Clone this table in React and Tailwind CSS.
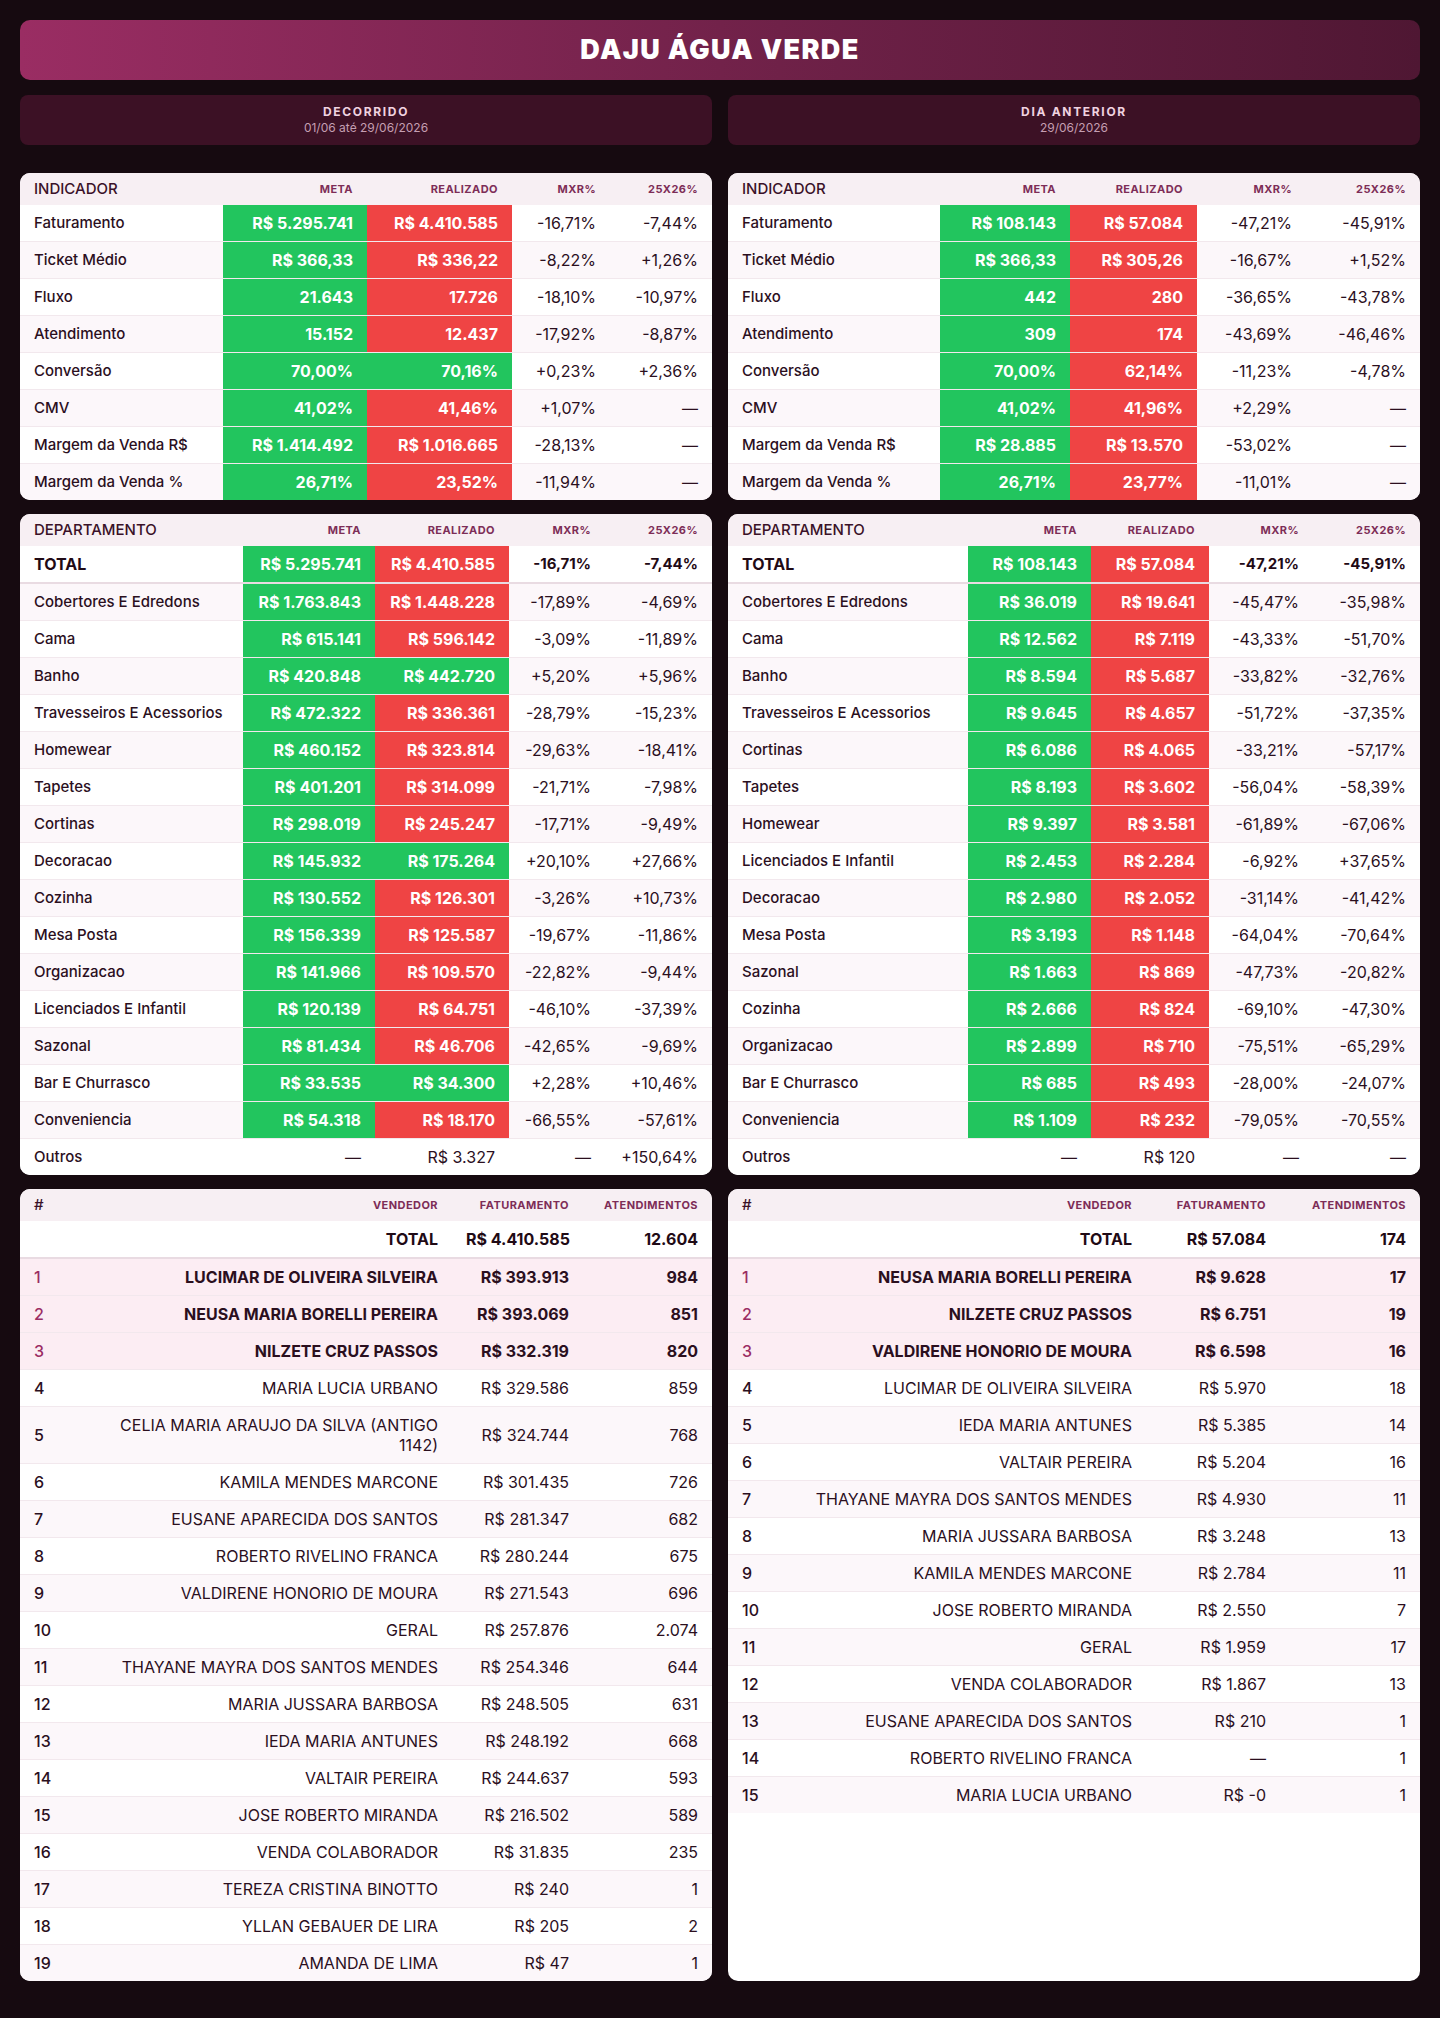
import React from 'react';

const G = 'g';
const R = 'r';

const indicadorDecorrido = [
  ['Faturamento', 'R$ 5.295.741', G, 'R$ 4.410.585', R, '-16,71%', '-7,44%'],
  ['Ticket Médio', 'R$ 366,33', G, 'R$ 336,22', R, '-8,22%', '+1,26%'],
  ['Fluxo', '21.643', G, '17.726', R, '-18,10%', '-10,97%'],
  ['Atendimento', '15.152', G, '12.437', R, '-17,92%', '-8,87%'],
  ['Conversão', '70,00%', G, '70,16%', G, '+0,23%', '+2,36%'],
  ['CMV', '41,02%', G, '41,46%', R, '+1,07%', '—'],
  ['Margem da Venda R$', 'R$ 1.414.492', G, 'R$ 1.016.665', R, '-28,13%', '—'],
  ['Margem da Venda %', '26,71%', G, '23,52%', R, '-11,94%', '—'],
];

const indicadorDia = [
  ['Faturamento', 'R$ 108.143', G, 'R$ 57.084', R, '-47,21%', '-45,91%'],
  ['Ticket Médio', 'R$ 366,33', G, 'R$ 305,26', R, '-16,67%', '+1,52%'],
  ['Fluxo', '442', G, '280', R, '-36,65%', '-43,78%'],
  ['Atendimento', '309', G, '174', R, '-43,69%', '-46,46%'],
  ['Conversão', '70,00%', G, '62,14%', R, '-11,23%', '-4,78%'],
  ['CMV', '41,02%', G, '41,96%', R, '+2,29%', '—'],
  ['Margem da Venda R$', 'R$ 28.885', G, 'R$ 13.570', R, '-53,02%', '—'],
  ['Margem da Venda %', '26,71%', G, '23,77%', R, '-11,01%', '—'],
];

const deptDecorrido = [
  ['Cobertores E Edredons', 'R$ 1.763.843', G, 'R$ 1.448.228', R, '-17,89%', '-4,69%'],
  ['Cama', 'R$ 615.141', G, 'R$ 596.142', R, '-3,09%', '-11,89%'],
  ['Banho', 'R$ 420.848', G, 'R$ 442.720', G, '+5,20%', '+5,96%'],
  ['Travesseiros E Acessorios', 'R$ 472.322', G, 'R$ 336.361', R, '-28,79%', '-15,23%'],
  ['Homewear', 'R$ 460.152', G, 'R$ 323.814', R, '-29,63%', '-18,41%'],
  ['Tapetes', 'R$ 401.201', G, 'R$ 314.099', R, '-21,71%', '-7,98%'],
  ['Cortinas', 'R$ 298.019', G, 'R$ 245.247', R, '-17,71%', '-9,49%'],
  ['Decoracao', 'R$ 145.932', G, 'R$ 175.264', G, '+20,10%', '+27,66%'],
  ['Cozinha', 'R$ 130.552', G, 'R$ 126.301', R, '-3,26%', '+10,73%'],
  ['Mesa Posta', 'R$ 156.339', G, 'R$ 125.587', R, '-19,67%', '-11,86%'],
  ['Organizacao', 'R$ 141.966', G, 'R$ 109.570', R, '-22,82%', '-9,44%'],
  ['Licenciados E Infantil', 'R$ 120.139', G, 'R$ 64.751', R, '-46,10%', '-37,39%'],
  ['Sazonal', 'R$ 81.434', G, 'R$ 46.706', R, '-42,65%', '-9,69%'],
  ['Bar E Churrasco', 'R$ 33.535', G, 'R$ 34.300', G, '+2,28%', '+10,46%'],
  ['Conveniencia', 'R$ 54.318', G, 'R$ 18.170', R, '-66,55%', '-57,61%'],
  ['Outros', '—', null, 'R$ 3.327', null, '—', '+150,64%'],
];

const deptDia = [
  ['Cobertores E Edredons', 'R$ 36.019', G, 'R$ 19.641', R, '-45,47%', '-35,98%'],
  ['Cama', 'R$ 12.562', G, 'R$ 7.119', R, '-43,33%', '-51,70%'],
  ['Banho', 'R$ 8.594', G, 'R$ 5.687', R, '-33,82%', '-32,76%'],
  ['Travesseiros E Acessorios', 'R$ 9.645', G, 'R$ 4.657', R, '-51,72%', '-37,35%'],
  ['Cortinas', 'R$ 6.086', G, 'R$ 4.065', R, '-33,21%', '-57,17%'],
  ['Tapetes', 'R$ 8.193', G, 'R$ 3.602', R, '-56,04%', '-58,39%'],
  ['Homewear', 'R$ 9.397', G, 'R$ 3.581', R, '-61,89%', '-67,06%'],
  ['Licenciados E Infantil', 'R$ 2.453', G, 'R$ 2.284', R, '-6,92%', '+37,65%'],
  ['Decoracao', 'R$ 2.980', G, 'R$ 2.052', R, '-31,14%', '-41,42%'],
  ['Mesa Posta', 'R$ 3.193', G, 'R$ 1.148', R, '-64,04%', '-70,64%'],
  ['Sazonal', 'R$ 1.663', G, 'R$ 869', R, '-47,73%', '-20,82%'],
  ['Cozinha', 'R$ 2.666', G, 'R$ 824', R, '-69,10%', '-47,30%'],
  ['Organizacao', 'R$ 2.899', G, 'R$ 710', R, '-75,51%', '-65,29%'],
  ['Bar E Churrasco', 'R$ 685', G, 'R$ 493', R, '-28,00%', '-24,07%'],
  ['Conveniencia', 'R$ 1.109', G, 'R$ 232', R, '-79,05%', '-70,55%'],
  ['Outros', '—', null, 'R$ 120', null, '—', '—'],
];

const vendDecorrido = [
  ['LUCIMAR DE OLIVEIRA SILVEIRA', 'R$ 393.913', '984'],
  ['NEUSA MARIA BORELLI PEREIRA', 'R$ 393.069', '851'],
  ['NILZETE CRUZ PASSOS', 'R$ 332.319', '820'],
  ['MARIA LUCIA URBANO', 'R$ 329.586', '859'],
  ['CELIA MARIA ARAUJO DA SILVA (ANTIGO 1142)', 'R$ 324.744', '768'],
  ['KAMILA MENDES MARCONE', 'R$ 301.435', '726'],
  ['EUSANE APARECIDA DOS SANTOS', 'R$ 281.347', '682'],
  ['ROBERTO RIVELINO FRANCA', 'R$ 280.244', '675'],
  ['VALDIRENE HONORIO DE MOURA', 'R$ 271.543', '696'],
  ['GERAL', 'R$ 257.876', '2.074'],
  ['THAYANE MAYRA DOS SANTOS MENDES', 'R$ 254.346', '644'],
  ['MARIA JUSSARA BARBOSA', 'R$ 248.505', '631'],
  ['IEDA MARIA ANTUNES', 'R$ 248.192', '668'],
  ['VALTAIR PEREIRA', 'R$ 244.637', '593'],
  ['JOSE ROBERTO MIRANDA', 'R$ 216.502', '589'],
  ['VENDA COLABORADOR', 'R$ 31.835', '235'],
  ['TEREZA CRISTINA BINOTTO', 'R$ 240', '1'],
  ['YLLAN GEBAUER DE LIRA', 'R$ 205', '2'],
  ['AMANDA DE LIMA', 'R$ 47', '1'],
];

const vendDia = [
  ['NEUSA MARIA BORELLI PEREIRA', 'R$ 9.628', '17'],
  ['NILZETE CRUZ PASSOS', 'R$ 6.751', '19'],
  ['VALDIRENE HONORIO DE MOURA', 'R$ 6.598', '16'],
  ['LUCIMAR DE OLIVEIRA SILVEIRA', 'R$ 5.970', '18'],
  ['IEDA MARIA ANTUNES', 'R$ 5.385', '14'],
  ['VALTAIR PEREIRA', 'R$ 5.204', '16'],
  ['THAYANE MAYRA DOS SANTOS MENDES', 'R$ 4.930', '11'],
  ['MARIA JUSSARA BARBOSA', 'R$ 3.248', '13'],
  ['KAMILA MENDES MARCONE', 'R$ 2.784', '11'],
  ['JOSE ROBERTO MIRANDA', 'R$ 2.550', '7'],
  ['GERAL', 'R$ 1.959', '17'],
  ['VENDA COLABORADOR', 'R$ 1.867', '13'],
  ['EUSANE APARECIDA DOS SANTOS', 'R$ 210', '1'],
  ['ROBERTO RIVELINO FRANCA', '—', '1'],
  ['MARIA LUCIA URBANO', 'R$ -0', '1'],
];

// cell background for meta / realizado
const fill = (c) => {
  if (c === G) return 'bg-[#22c55e] text-white font-bold';
  if (c === R) return 'bg-[#ef4444] text-white font-bold';
  return 'text-[#2b0f1e]';
};

const Card = ({ children }) => (
  <div className="bg-white rounded-[10px] overflow-hidden">{children}</div>
);

const HeadCell = ({ children, left }) => (
  <th
    className={`px-3.5 py-2 leading-4 whitespace-nowrap ${
      left
        ? 'text-left text-[15px] font-medium text-[#3a1128]'
        : 'text-right text-[11px] font-bold tracking-[0.04em] text-[#7d2d57]'
    }`}
  >
    {children}
  </th>
);

const MetricTable = ({ title, cols, total, rows }) => (
  <Card>
    <table className="w-full table-fixed text-[16px] leading-5">
      <colgroup>
        {cols.map((w, i) => (
          <col key={i} style={{ width: w }} />
        ))}
      </colgroup>
      <thead>
        <tr className="bg-[#f7eff3]">
          <HeadCell left>{title}</HeadCell>
          <HeadCell>META</HeadCell>
          <HeadCell>REALIZADO</HeadCell>
          <HeadCell>MXR%</HeadCell>
          <HeadCell>25X26%</HeadCell>
        </tr>
      </thead>
      <tbody>
        {total && (
          <tr className="border-b-2 border-[#e9dbe2] bg-white">
            <td className="px-3.5 py-2 text-[16px] font-bold text-[#1f0a15]">TOTAL</td>
            <td className="px-3.5 py-2 text-right bg-[#22c55e] text-white font-bold">{total[0]}</td>
            <td className="px-3.5 py-2 text-right bg-[#ef4444] text-white font-bold">{total[1]}</td>
            <td className="px-3.5 py-2 text-right text-[15px] font-bold text-[#1f0a15]">{total[2]}</td>
            <td className="px-3.5 py-2 text-right text-[15px] font-bold text-[#1f0a15]">{total[3]}</td>
          </tr>
        )}
        {rows.map((r, i) => {
          const tinted = total ? i % 2 === 0 : i % 2 === 1;
          return (
            <tr
              key={r[0]}
              className={`${i === rows.length - 1 ? '' : 'border-b border-[#f2e8ed]'} ${
                tinted ? 'bg-[#fcf7fa]' : 'bg-white'
              }`}
            >
              <td className="px-3.5 py-2 text-[15px] font-medium text-[#2b0f1e] whitespace-nowrap">
                {r[0]}
              </td>
              <td className={`px-3.5 py-2 text-right whitespace-nowrap ${fill(r[2])}`}>{r[1]}</td>
              <td className={`px-3.5 py-2 text-right whitespace-nowrap ${fill(r[4])}`}>{r[3]}</td>
              <td className="px-3.5 py-2 text-right text-[#2b0f1e]">{r[5]}</td>
              <td className="px-3.5 py-2 text-right text-[#2b0f1e]">{r[6]}</td>
            </tr>
          );
        })}
      </tbody>
    </table>
  </Card>
);

const SellerTable = ({ cols, total, rows }) => (
  <div className="bg-white rounded-[10px] overflow-hidden h-full">
    <table className="w-full table-fixed text-[16px] leading-5">
      <colgroup>
        {cols.map((w, i) => (
          <col key={i} style={{ width: w }} />
        ))}
      </colgroup>
      <thead>
        <tr className="bg-[#f7eff3]">
          <HeadCell left>#</HeadCell>
          <HeadCell>VENDEDOR</HeadCell>
          <HeadCell>FATURAMENTO</HeadCell>
          <HeadCell>ATENDIMENTOS</HeadCell>
        </tr>
      </thead>
      <tbody>
        <tr className="border-b-2 border-[#e9dbe2] bg-white text-[16px] font-bold text-[#1f0a15]">
          <td className="px-3.5 py-2"></td>
          <td className="px-3.5 py-2 text-right">TOTAL</td>
          <td className="px-3.5 py-2 text-right whitespace-nowrap">{total[0]}</td>
          <td className="px-3.5 py-2 text-right">{total[1]}</td>
        </tr>
        {rows.map((r, i) => {
          const top = i < 3;
          const bg = top ? 'bg-[#fcedf3]' : i % 2 === 0 ? 'bg-[#fcf7fa]' : 'bg-white';
          return (
            <tr
              key={r[0]}
              className={`${i === rows.length - 1 ? '' : 'border-b border-[#f2e8ed]'} ${bg}`}
            >
              <td
                className={`px-3.5 py-2 font-medium ${
                  top ? 'text-[#9b2d63]' : 'text-[#2b0f1e]'
                }`}
              >
                {i + 1}
              </td>
              <td className={`px-3.5 py-2 text-right text-[#2b0f1e] ${top ? 'font-bold' : ''}`}>
                {r[0]}
              </td>
              <td
                className={`px-3.5 py-2 text-right text-[#2b0f1e] whitespace-nowrap ${
                  top ? 'font-bold' : ''
                }`}
              >
                {r[1]}
              </td>
              <td className={`px-3.5 py-2 text-right text-[#2b0f1e] ${top ? 'font-bold' : ''}`}>
                {r[2]}
              </td>
            </tr>
          );
        })}
      </tbody>
    </table>
  </div>
);

const Period = ({ label, date }) => (
  <div className="h-[50px] rounded-lg bg-[#3c1125] flex flex-col items-center justify-center">
    <div className="text-[12px] leading-4 font-bold tracking-[0.14em] text-[#f0d3e0]">{label}</div>
    <div className="text-[12px] leading-4 text-[#c59fb2]">{date}</div>
  </div>
);

export default function App() {
  return (
    <div className="min-h-screen bg-[#160a10] px-5 pt-5 pb-8 font-[Inter,sans-serif]">
      <div className="h-[60px] rounded-[10px] bg-linear-to-r from-[#9a2d63] via-[#72224a] to-[#4f1733] flex items-center justify-center">
        <h1 className="text-[27px] font-black tracking-[0.05em] text-white">DAJU ÁGUA VERDE</h1>
      </div>

      <div className="grid grid-cols-2 gap-4 mt-[15px]">
        <Period label="DECORRIDO" date="01/06 até 29/06/2026" />
        <Period label="DIA ANTERIOR" date="29/06/2026" />
      </div>

      <div className="grid grid-cols-2 gap-4 mt-7">
        <MetricTable title="INDICADOR" cols={[203, 144, 145, 98, 102]} rows={indicadorDecorrido} />
        <MetricTable title="INDICADOR" cols={[212, 130, 127, 109, 114]} rows={indicadorDia} />
      </div>

      <div className="grid grid-cols-2 gap-4 mt-3.5">
        <MetricTable
          title="DEPARTAMENTO"
          cols={[223, 132, 134, 96, 107]}
          total={['R$ 5.295.741', 'R$ 4.410.585', '-16,71%', '-7,44%']}
          rows={deptDecorrido}
        />
        <MetricTable
          title="DEPARTAMENTO"
          cols={[240, 123, 118, 104, 107]}
          total={['R$ 108.143', 'R$ 57.084', '-47,21%', '-45,91%']}
          rows={deptDia}
        />
      </div>

      <div className="grid grid-cols-2 gap-4 mt-3.5">
        <SellerTable cols={[75, 357, 131, 129]} total={['R$ 4.410.585', '12.604']} rows={vendDecorrido} />
        <SellerTable cols={[60, 358, 134, 140]} total={['R$ 57.084', '174']} rows={vendDia} />
      </div>
    </div>
  );
}
